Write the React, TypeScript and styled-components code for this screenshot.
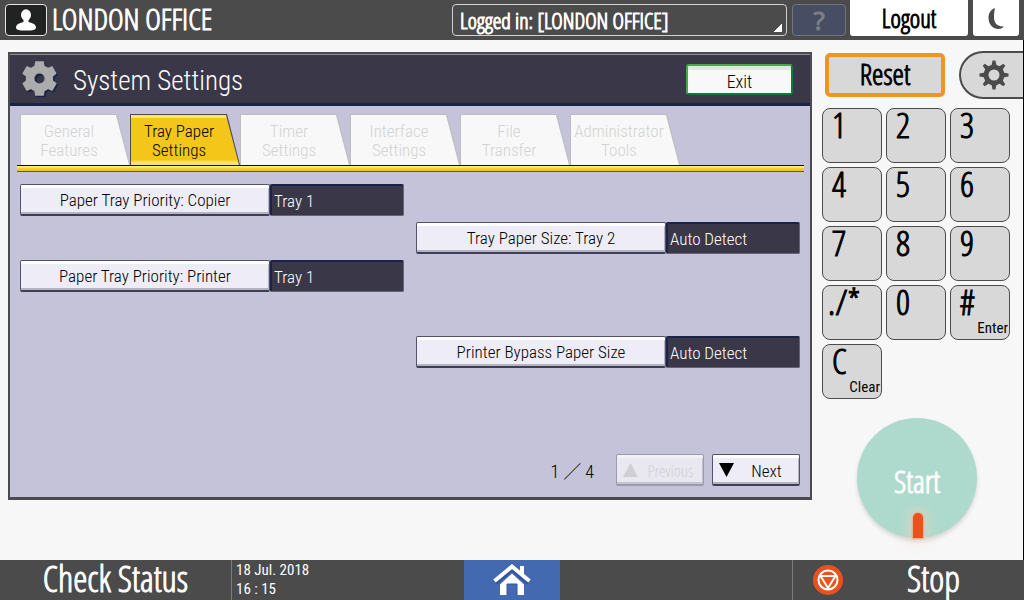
import React from "react";
import styled, { createGlobalStyle } from "styled-components";

const chromeFont = `"Open Sans Condensed Light", "Roboto Condensed", sans-serif`;
const panelFont = `"Roboto Condensed", "Noto Sans", "Noto Sans CJK JP", sans-serif`;

const GlobalStyle = createGlobalStyle`
  *, *::before, *::after { box-sizing: border-box; }
  body { margin: 0; background: #f7f7f7; font-family: ${chromeFont}; -webkit-text-stroke: 1px; }
  button, select { font: inherit; color: inherit; margin: 0; padding: 0; border: 0; cursor: pointer; }
  button:disabled { cursor: default; }
  h1, h2, p { margin: 0; font-weight: inherit; }
  svg { display: block; }
`;

const Screen = styled.div`
  display: flex;
  flex-direction: column;
  min-height: 100vh;
`;

const TopBar = styled.header`
  display: flex;
  height: 40px;
  padding: 0 5px;
  background: #4b4b4c;
  color: #fff;
`;

const UserBadge = styled.div`
  display: grid;
  place-items: center;
  width: 42px;
  height: 32px;
  margin: 4px 5px 0 0;
  border: 1px solid #e4e4e4;
  border-radius: 4px;
  background: #212323;
`;

const UserName = styled.h1`
  flex: 1;
  font-size: 30px;
  line-height: 38px;
  white-space: nowrap;
`;

const LoginSelect = styled.select`
  appearance: none;
  width: 335px;
  height: 32px;
  margin: 4px 5px 0 0;
  padding: 0 7px;
  border: 1px solid #d0d0d0;
  border-radius: 4px;
  color: #fff;
  font-size: 22px;
  line-height: 30px;
  background: linear-gradient(135deg, transparent 50%, #fff 50%) right 4px bottom 3px / 8px 8px no-repeat #4b4b4c;
`;

const HelpButton = styled.button`
  width: 54px;
  height: 32px;
  margin: 4px 4px 0 0;
  border: 1px solid #74767b;
  border-radius: 4px;
  background: #474e64;
  color: #7d7f84;
  font-family: "Open Sans", sans-serif;
  font-size: 26px;
  line-height: 28px;
`;

const WhiteButton = styled.button<{ $width: number }>`
  display: grid;
  place-items: center;
  width: ${(p) => p.$width}px;
  height: 36px;
  padding-bottom: 1px;
  border-radius: 0 0 3px 3px;
  background: #fff;
  color: #000;
  font-size: 25px;
  line-height: 34px;
  & + & { margin-left: 5px; }
`;

const Body = styled.div`
  display: flex;
  flex: 1;
  border-right: 1px solid #000;
`;

const Panel = styled.main`
  display: flex;
  flex: 1;
  flex-direction: column;
  height: 448px;
  margin: 12px 0 0 8px;
  border: 2px solid #4b4b4f;
  border-bottom-width: 3px;
  background: #c5c3da;
  font-family: ${panelFont};
  font-weight: 300;
  -webkit-text-stroke: 0;
`;

const PanelHeader = styled.div`
  display: flex;
  align-items: center;
  height: 52px;
  padding: 0 17px 0 12px;
  border-top: 1px solid #8d8c9b;
  border-bottom: 3px solid #1b2347;
  background: #3a3848;
  color: #fff;
`;

const PanelTitle = styled.h2`
  flex: 1;
  margin-left: 15px;
  padding-top: 4px;
  font-size: 27px;
`;

const ExitButton = styled.button`
  width: 107px;
  height: 31px;
  padding-top: 4px;
  border: 2px solid #0c7a3c;
  border-top-color: #3fae3f;
  border-left-color: #3fae3f;
  border-radius: 3px;
  background: linear-gradient(#e4e4e4 4px, #f8f8f8 4px);
  color: #000;
  font-size: 18px;
`;

const Tabs = styled.nav`
  display: flex;
  margin-top: 8px;
  padding-left: 10px;
`;

const Tab = styled.button<{ $active?: boolean }>`
  position: relative;
  width: 110px;
  height: 51px;
  padding: 2px 12px 0 0;
  background: ${(p) => (p.$active ? "#4b4b4f" : "#bdbdbd")};
  color: ${(p) => (p.$active ? "#000" : "#d3d3d3")};
  font-size: 17px;
  line-height: 19px;
  white-space: nowrap;
  clip-path: polygon(0 0, 97px 0, 110px 100%, 0 100%);
  isolation: isolate;
  &::before {
    content: "";
    position: absolute;
    z-index: -1;
    inset: 1px 1px 0;
    background: ${(p) => (p.$active ? "linear-gradient(#f9e86f 3px, #f5c61a 3px 45px, #f9e46a 47px)" : "#f8f8f8")};
    clip-path: polygon(0 0, 95px 0, 108px 100%, 0 100%);
  }
`;

const TabStrip = styled.div`
  height: 7px;
  margin: 0 6px 0 7px;
  border-top: 1px solid #111;
  border-bottom: 1px solid #55525a;
  background: linear-gradient(#faed80 1px, #f5c61a 3px);
`;

const Settings = styled.div`
  display: grid;
  grid-template-columns: 1fr 1fr;
  grid-auto-rows: 32px;
  gap: 6px 12px;
  padding: 12px 10px 0;
`;

const Setting = styled.div<{ $column: number; $row: number }>`
  display: grid;
  grid-template-columns: minmax(0, 250fr) minmax(0, 134fr);
  grid-column: ${(p) => p.$column};
  grid-row: ${(p) => p.$row};
`;

const RaisedButton = styled.button`
  height: 32px;
  border: 1px solid #55536c;
  border-bottom: 2px solid #3f3d58;
  border-radius: 2px;
  background: #edecf7;
  box-shadow: inset 0 3px #fff, inset -1px -2px #b4b4c0;
  color: #000;
  font-size: 17px;
  &:disabled {
    border-color: #9c9bab;
    background: #e9e8f0;
    box-shadow: inset 0 3px #f2f2f4, inset -1px -2px #c4c4cc;
    color: #cfcfd3;
    font-family: ${chromeFont};
  }
`;

const SettingValue = styled.output`
  height: 32px;
  padding: 0 2px;
  border: 1px solid #65637a;
  border-top: 2px solid #1b2347;
  border-left: 2px solid #1b2347;
  border-radius: 2px;
  background: #3a3848;
  color: #fff;
  font-size: 17px;
  line-height: 30px;
`;

const Pager = styled.div`
  display: flex;
  align-items: center;
  justify-content: flex-end;
  gap: 8px;
  margin-top: auto;
  padding: 0 10px 11px 0;
`;

const PageCount = styled.p`
  margin-right: 14px;
  font-size: 18px;
`;

const PageButton = styled(RaisedButton)`
  display: flex;
  align-items: center;
  width: 88px;
  padding-left: 6px;
  span { flex: 1; padding-top: 2px; }
`;

const Side = styled.aside`
  width: 211px;
  padding: 11px 0 0 10px;
`;

const SideTop = styled.div`
  display: flex;
  align-items: center;
  justify-content: space-between;
  padding-left: 3px;
`;

const ResetButton = styled.button`
  width: 120px;
  height: 44px;
  padding-bottom: 2px;
  border: 4px solid #f39320;
  border-radius: 5px;
  background: #d8d8d8;
  color: #000;
  font-size: 29px;
  line-height: 34px;
`;

const GearButton = styled.button`
  display: grid;
  place-items: center;
  width: 64px;
  height: 48px;
  padding-left: 4px;
  border: 2px solid #4b4b4c;
  border-right: 0;
  border-radius: 24px 0 0 24px;
  background: #d8d8d8;
`;

const Keypad = styled.div`
  display: grid;
  grid-template-columns: repeat(3, 60px);
  gap: 4px;
  margin-top: 9px;
`;

const Key = styled.button<{ $wide?: boolean }>`
  display: flex;
  flex-direction: column;
  height: 55px;
  padding: 0 1px 0 ${(p) => (p.$wide ? 5 : 9)}px;
  border: 1px solid #4b4b4c;
  border-radius: 8px;
  background: #d8d8d8;
  color: #000;
  text-align: left;
  font-size: 35px;
  line-height: 31px;
`;

const KeyHint = styled.small`
  align-self: flex-end;
  font-family: ${panelFont};
  font-size: 15px;
  line-height: 22px;
  -webkit-text-stroke: 0;
`;

const StartButton = styled.button`
  display: flex;
  flex-direction: column;
  align-items: center;
  justify-content: flex-end;
  width: 120px;
  height: 120px;
  margin: 19px 0 0 35px;
  border-radius: 50%;
  background: #aedacd;
  box-shadow: 0 3px 4px #0002;
  color: #fff;
  font-size: 31px;
  line-height: 36px;
`;

const Lamp = styled.i`
  width: 10px;
  height: 25px;
  margin: 14px 0 0 1px;
  border-radius: 5px 5px 0 0;
  background: #e8521f;
  box-shadow: 0 0 2px 1px #f5a585, 0 0 12px 4px #f9d4c680;
`;

const BottomBar = styled.footer`
  display: grid;
  grid-template-columns: 231fr 233fr 96px 232fr 232fr;
  height: 40px;
  background: #4b4b4c;
  color: #fff;
`;

const StatusButton = styled.button`
  padding-bottom: 2px;
  background: none;
  font-size: 36px;
  line-height: 36px;
`;

const Clock = styled.time`
  padding: 1px 4px;
  border-left: 1px solid #7d7d7d;
  font-family: ${panelFont};
  font-size: 15px;
  line-height: 19px;
  -webkit-text-stroke: 0;
`;

const HomeButton = styled.button`
  display: grid;
  place-items: center;
  background: #4369b1;
`;

const StopButton = styled.button`
  display: flex;
  grid-column: 5;
  align-items: center;
  padding-left: 20px;
  border-left: 1px solid #7d7d7d;
  background: none;
  font-size: 36px;
  line-height: 36px;
  span { flex: 1; padding-bottom: 2px; }
`;

const gearPath = (teeth: number, cx: number, cy: number, outer: number, inner: number, tip: number, root: number) => {
  const points: string[] = [];
  for (let i = 0; i < teeth; i++) {
    const a = (i * 2 * Math.PI) / teeth - Math.PI / 2;
    [[-root, inner], [-tip, outer], [tip, outer], [root, inner]].forEach(([d, r]) =>
      points.push(`${(cx + r * Math.cos(a + d)).toFixed(2)},${(cy + r * Math.sin(a + d)).toFixed(2)}`)
    );
  }
  return `M${points.join("L")}Z`;
};

const hole = (cx: number, cy: number, r: number) =>
  `M${cx - r},${cy}a${r},${r} 0 1 0 ${2 * r},0a${r},${r} 0 1 0 ${-2 * r},0Z`;

const TitleGear = () => (
  <svg width="36" height="38" viewBox="0 0 36 38" fillRule="evenodd" strokeLinejoin="round" aria-hidden="true">
    <path d={gearPath(6, 19, 20, 17, 13, 0.22, 0.34) + hole(19, 20, 5)} fill="#1b2347" stroke="#1b2347" strokeWidth="1.5" />
    <path d={gearPath(6, 17.5, 18.5, 17, 13, 0.22, 0.34) + hole(17.5, 18.5, 5.8)} fill="#acacac" stroke="#acacac" strokeWidth="1.5" />
  </svg>
);

const MenuGear = () => (
  <svg width="30" height="30" viewBox="0 0 30 30" fillRule="evenodd" aria-hidden="true">
    <path d={gearPath(8, 15, 15, 14.6, 10.5, 0.1, 0.22) + hole(15, 15, 5.5)} fill="#4b4b4c" />
  </svg>
);

const UserIcon = () => (
  <svg width="20" height="22" viewBox="0 0 20 22" fill="#fff" aria-hidden="true">
    <ellipse cx="10" cy="6" rx="5" ry="5.8" />
    <path d="M7.5 10h5v3c4.500 1 7.500 2.800 7.500 5.500 0 2.500-3 3-10 3s-10-.5-10-3C0 15.800 3 14 7.500 13Z" />
  </svg>
);

const MoonIcon = () => (
  <svg width="20" height="24" viewBox="0 0 20 24" aria-hidden="true">
    <path d="M9 2C4 4 2.500 8 2.500 12c0 6.500 4.500 11 10 11 2 0 4-.8 5.500-2.500C11.500 21 8 17 8 11.500c0-4 .3-7 1-9.500Z" fill="#4b4b4c" />
  </svg>
);

const HomeIcon = () => (
  <svg width="38" height="32" viewBox="0 0 38 32" aria-hidden="true">
    <path d="M19 9.500 31 20.500V31H7V20.500Z" fill="#fff" />
    <path d="M2 18 19 3.500 36 18" fill="none" stroke="#34549b" strokeWidth="6.500" />
    <path d="M27 2h4v12l-4-4Z" fill="#fff" />
    <path d="M1.500 17 19 2.500 36.500 17" fill="none" stroke="#fff" strokeWidth="4" />
    <path d="M14 31V20h10v11" fill="#4369b1" stroke="#34549b" />
  </svg>
);

const StopIcon = () => (
  <svg width="30" height="30" viewBox="0 0 30 30" fill="none" stroke="#fff" strokeWidth="2" aria-hidden="true">
    <circle cx="15" cy="15" r="15" fill="#e8521f" stroke="none" />
    <circle cx="15" cy="15" r="9.500" />
    <path d="M7.500 11h15L15 23Z" strokeLinejoin="round" />
  </svg>
);

const Triangle = ({ down }: { down?: boolean }) => (
  <svg width="15" height="14" viewBox="0 0 15 14" fill="currentColor" aria-hidden="true">
    <path d={down ? "M0 0h15L7.500 14Z" : "M0 14h15L7.500 0Z"} />
  </svg>
);

const tabs = [
  ["General", "Features"],
  ["Tray Paper", "Settings"],
  ["Timer", "Settings"],
  ["Interface", "Settings"],
  ["File", "Transfer"],
  ["Administrator", "Tools"],
];

const settings = [
  { id: "copier", label: "Paper Tray Priority: Copier", value: "Tray 1", column: 1, row: 1 },
  { id: "tray2", label: "Tray Paper Size: Tray 2", value: "Auto Detect", column: 2, row: 2 },
  { id: "printer", label: "Paper Tray Priority: Printer", value: "Tray 1", column: 1, row: 3 },
  { id: "bypass", label: "Printer Bypass Paper Size", value: "Auto Detect", column: 2, row: 5 },
];

const keys = ["1", "2", "3", "4", "5", "6", "7", "8", "9", "./*", "0", "#", "C"];
const hints: Record<string, string> = { "#": "Enter", C: "Clear" };

export default function App() {
  return (
    <Screen>
      <GlobalStyle />
      <TopBar>
        <UserBadge><UserIcon /></UserBadge>
        <UserName>LONDON OFFICE</UserName>
        <LoginSelect aria-label="Logged in user">
          <option>Logged in: [LONDON OFFICE]</option>
        </LoginSelect>
        <HelpButton aria-label="Help">?</HelpButton>
        <WhiteButton $width={118}>Logout</WhiteButton>
        <WhiteButton $width={46} aria-label="Energy saver"><MoonIcon /></WhiteButton>
      </TopBar>
      <Body>
        <Panel>
          <PanelHeader>
            <TitleGear />
            <PanelTitle>System Settings</PanelTitle>
            <ExitButton>Exit</ExitButton>
          </PanelHeader>
          <Tabs>
            {tabs.map(([first, second], i) => (
              <Tab key={first} $active={i === 1} disabled={i !== 1}>
                {first}<br />{second}
              </Tab>
            ))}
          </Tabs>
          <TabStrip />
          <Settings>
            {settings.map((s) => (
              <Setting key={s.id} $column={s.column} $row={s.row}>
                <RaisedButton id={s.id}>{s.label}</RaisedButton>
                <SettingValue aria-labelledby={s.id}>{s.value}</SettingValue>
              </Setting>
            ))}
          </Settings>
          <Pager>
            <PageCount>1 ／ 4</PageCount>
            <PageButton disabled><Triangle /><span>Previous</span></PageButton>
            <PageButton><Triangle down /><span>Next</span></PageButton>
          </Pager>
        </Panel>
        <Side>
          <SideTop>
            <ResetButton>Reset</ResetButton>
            <GearButton aria-label="User tools"><MenuGear /></GearButton>
          </SideTop>
          <Keypad>
            {keys.map((k) => (
              <Key key={k} $wide={k.length > 1}>
                {k}
                {hints[k] && <KeyHint>{hints[k]}</KeyHint>}
              </Key>
            ))}
          </Keypad>
          <StartButton>Start<Lamp /></StartButton>
        </Side>
      </Body>
      <BottomBar>
        <StatusButton>Check Status</StatusButton>
        <Clock dateTime="2018-07-18T16:15">18 Jul. 2018<br />16 : 15</Clock>
        <HomeButton aria-label="Home"><HomeIcon /></HomeButton>
        <StopButton><StopIcon /><span>Stop</span></StopButton>
      </BottomBar>
    </Screen>
  );
}
